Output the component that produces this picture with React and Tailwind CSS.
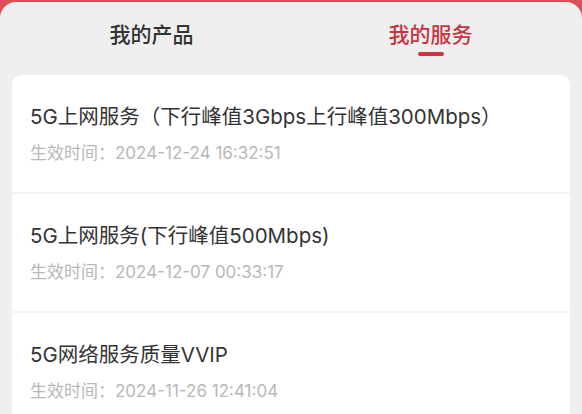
import React, { useState } from 'react';

const services = [
  { name: '5G上网服务（下行峰值3Gbps上行峰值300Mbps）', time: '2024-12-24 16:32:51' },
  { name: '5G上网服务(下行峰值500Mbps)', time: '2024-12-07 00:33:17' },
  { name: '5G网络服务质量VVIP', time: '2024-11-26 12:41:04' },
];

const font = { fontFamily: 'Inter, "Noto Sans CJK SC", "Noto Sans", sans-serif' };

export default function App() {
  const [tab, setTab] = useState(1);

  return (
    <div className="w-[582px] h-[414px] overflow-hidden bg-[#dc4f57] pt-[2px]" style={font}>
      <div className="h-full bg-[#efefef] rounded-t-[16px] px-3">
        {/* Tabs */}
        <div className="grid grid-cols-2 h-[73px]">
          {['我的产品', '我的服务'].map((label, idx) => (
            <button
              key={label}
              onClick={() => setTab(idx)}
              className="flex flex-col items-center pt-[18px]"
            >
              <span
                className={`text-[21px] leading-[30px] font-medium ${
                  tab === idx ? 'text-[#c9333f]' : 'text-[#333333]'
                }`}
              >
                {label}
              </span>
              <span
                className={`mt-[2px] w-[26px] h-[4px] rounded-full ${
                  tab === idx ? 'bg-[#cf3540]' : 'bg-transparent'
                }`}
              />
            </button>
          ))}
        </div>

        {/* Service list */}
        <div className="bg-white rounded-t-[10px]">
          {services.map((item, idx) => (
            <div
              key={idx}
              className={`flex flex-col gap-3 px-[18px] pt-[28px] pb-[29px] ${
                idx > 0 ? 'border-t-2 border-[#f3f3f3]' : ''
              }`}
            >
              <div className="text-[20.5px] leading-[28px] text-[#333333] whitespace-nowrap">{item.name}</div>
              <div className="text-[17px] leading-[20px] text-[#b8b8b8]">生效时间：{item.time}</div>
            </div>
          ))}
        </div>
      </div>
    </div>
  );
}
